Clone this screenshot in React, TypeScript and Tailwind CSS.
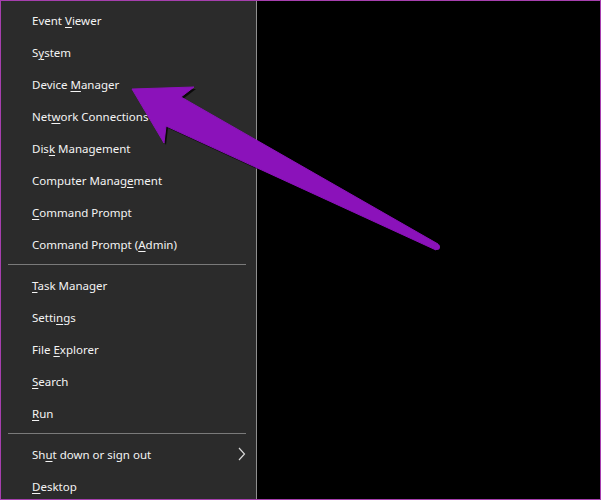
import { Fragment } from "react";

type Item = { label: string; key: number; sub?: boolean };

// key = index of the underlined mnemonic letter
const groups: Item[][] = [
  [
    { label: "Event Viewer", key: 6 },
    { label: "System", key: 1 },
    { label: "Device Manager", key: 7 },
    { label: "Network Connections", key: 3 },
    { label: "Disk Management", key: 3 },
    { label: "Computer Management", key: 14 },
    { label: "Command Prompt", key: 0 },
    { label: "Command Prompt (Admin)", key: 16 },
  ],
  [
    { label: "Task Manager", key: 0 },
    { label: "Settings", key: 5 },
    { label: "File Explorer", key: 5 },
    { label: "Search", key: 0 },
    { label: "Run", key: 0 },
  ],
  [
    { label: "Shut down or sign out", key: 2, sub: true },
    { label: "Desktop", key: 0 },
  ],
];

function Row({ item }: { item: Item }) {
  const { label, key } = item;
  return (
    <div className="flex h-8 items-center justify-between pl-[31px] pr-[10px]">
      <span className="pt-[2px] text-[11.5px] leading-none text-[#f4f4f4]">
        {label.slice(0, key)}
        <u className="underline-offset-2">{label[key]}</u>
        {label.slice(key + 1)}
      </span>
      {item.sub && (
        <svg width="8" height="14" viewBox="0 0 8 14" className="text-[#d8d8d8]">
          <polyline points="1,1 6.5,7 1,13" fill="none" stroke="currentColor" strokeWidth="1.2" />
        </svg>
      )}
    </div>
  );
}

function Arrow() {
  const pts = "131,88 193,86 180,96 437,243 435,249 165,125 163,142";
  return (
    <svg className="pointer-events-none absolute left-0 top-0" width="601" height="500">
      <polygon points={pts} transform="translate(2,2)" fill="#000" fillOpacity="0.75" strokeLinejoin="round" />
      <polygon points={pts} fill="#8b12ba" stroke="#8b12ba" strokeWidth="1" strokeLinejoin="round" />
      <circle cx="436" cy="246" r="3" fill="#8b12ba" />
    </svg>
  );
}

export default function App() {
  return (
    <div className="relative flex h-[500px] w-[601px] overflow-hidden border border-[#a63fae] bg-black font-['Noto_Sans',sans-serif]">
      <div className="w-[256px] shrink-0 border-r border-[#8f8f8f] bg-[#2b2b2b] pt-[3px]">
        {groups.map((g, i) => (
          <Fragment key={i}>
            {i > 0 && <div className="mb-[4px] ml-[7px] mr-[10px] mt-[4px] h-px bg-[#7a7a7a]" />}
            {g.map((it) => (
              <Row key={it.label} item={it} />
            ))}
          </Fragment>
        ))}
      </div>
      <div className="flex-1 bg-black" />
      <Arrow />
    </div>
  );
}
